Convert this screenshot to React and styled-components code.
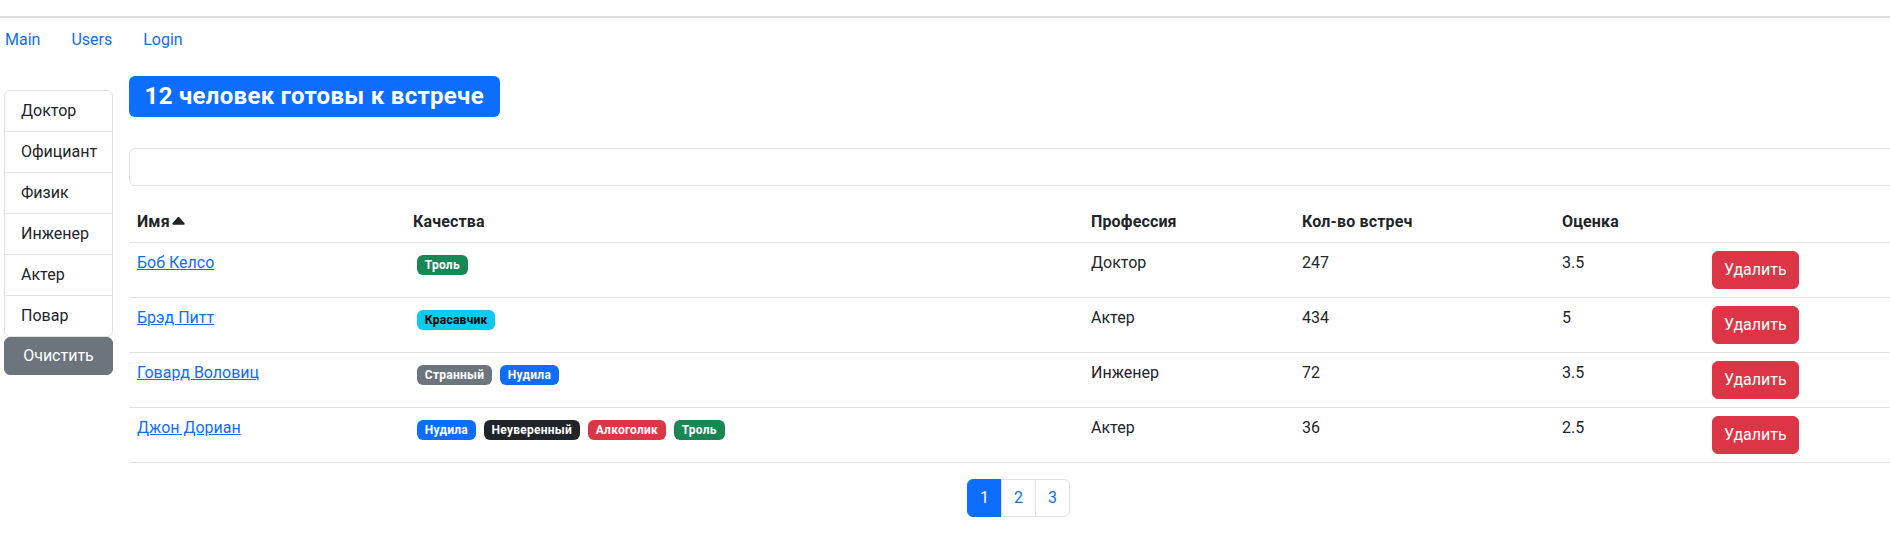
import React from "react";
import styled, { createGlobalStyle } from "styled-components";

const GlobalStyle = createGlobalStyle`
  html, body { margin: 0; padding: 0; background: #fff; overflow-x: hidden; }
  body {
    font-family: Roboto, "Noto Sans", "Liberation Sans", sans-serif;
    font-size: 16px;
    line-height: 1.5;
    color: #212529;
  }
  * { box-sizing: border-box; }
`;

const TopStrip = styled.div`
  height: 18px;
  border-bottom: 2px solid #dcdcdc;
`;

const Nav = styled.nav`
  display: flex;
  gap: 31px;
  padding: 3px 0 0 5px;
  height: 40px;
  align-items: center;
`;

const NavLink = styled.a`
  color: #0d6efd;
  text-decoration: none;
  line-height: 24px;
`;

const Layout = styled.div`
  display: flex;
  align-items: flex-start;
  gap: 16px;
  padding-left: 4px;
`;

const Sidebar = styled.aside`
  width: 109px;
  flex-shrink: 0;
  margin-top: 32px;
  display: flex;
  flex-direction: column;
`;

const ListGroup = styled.ul`
  list-style: none;
  margin: 0;
  padding: 0;
  border: 1px solid #dee2e6;
  border-radius: 6px;
  overflow: hidden;
`;

const ListItem = styled.li`
  padding: 8px 16px;
  line-height: 24px;
  white-space: nowrap;
  & + & { border-top: 1px solid #dee2e6; }
`;

const ClearButton = styled.button`
  height: 38px;
  width: 100%;
  border: 1px solid #6c757d;
  background: #6c757d;
  color: #fff;
  font: inherit;
  line-height: 24px;
  border-radius: 6px;
  padding: 6px 12px;
`;

const Main = styled.main`
  width: 1779px;
  flex-shrink: 0;
  margin-top: 18px;
`;

const Title = styled.h2`
  display: flex;
  margin: 0 0 31px;
`;

const TitleBadge = styled.span`
  display: inline-block;
  background: #0d6efd;
  color: #fff;
  font-size: 24px;
  font-weight: 700;
  line-height: 1;
  letter-spacing: 0.3px;
  padding: 8.4px 15.6px;
  border-radius: 6px;
`;

const SearchInput = styled.input`
  display: block;
  width: 100%;
  height: 38px;
  border: 1px solid #dee2e6;
  border-radius: 6px;
  padding: 6px 12px;
  font: inherit;
  margin-bottom: 16px;
`;

const Table = styled.table`
  width: 100%;
  border-collapse: collapse;
  table-layout: fixed;
  vertical-align: top;
`;

const Th = styled.th`
  text-align: left;
  font-weight: 700;
  letter-spacing: 0.15px;
  padding: 8px;
  line-height: 24px;
  border-bottom: 1px solid #dee2e6;
  white-space: nowrap;
`;

const Td = styled.td`
  padding: 8px;
  line-height: 24px;
  border-bottom: 1px solid #dee2e6;
  vertical-align: top;
`;

const NameLink = styled.a`
  color: #0d6efd;
  text-decoration: underline;
`;

const SortIcon = styled.svg`
  width: 17px;
  height: 17px;
  vertical-align: -2px;
`;

const badgeColors = {
  success: ["#198754", "#fff"],
  info: ["#0dcaf0", "#000"],
  secondary: ["#6c757d", "#fff"],
  primary: ["#0d6efd", "#fff"],
  dark: ["#212529", "#fff"],
  danger: ["#dc3545", "#fff"],
};

const Badge = styled.span`
  display: inline-block;
  margin: 4px;
  padding: 4.2px 7.8px;
  font-size: 12px;
  font-weight: 700;
  letter-spacing: 0.25px;
  line-height: 1;
  border-radius: 6px;
  background: ${(p) => badgeColors[p.$tone][0]};
  color: ${(p) => badgeColors[p.$tone][1]};
`;

const DeleteButton = styled.button`
  background: #dc3545;
  color: #fff;
  border: 1px solid #dc3545;
  border-radius: 6px;
  padding: 6px 11px;
  font: inherit;
  line-height: 24px;
`;

const Pager = styled.ul`
  display: flex;
  justify-content: center;
  list-style: none;
  margin: 16px 0 0;
  padding: 0;
`;

const PageLink = styled.li`
  padding: 6px 12px;
  line-height: 24px;
  border: 1px solid #dee2e6;
  color: ${(p) => (p.$active ? "#fff" : "#0d6efd")};
  background: ${(p) => (p.$active ? "#0d6efd" : "#fff")};
  border-color: ${(p) => (p.$active ? "#0d6efd" : "#dee2e6")};
  & + & { margin-left: -1px; }
  &:first-child { border-radius: 6px 0 0 6px; }
  &:last-child { border-radius: 0 6px 6px 0; }
`;

const professions = ["Доктор", "Официант", "Физик", "Инженер", "Актер", "Повар"];

const users = [
  { name: "Боб Келсо", qualities: [["Троль", "success"]], profession: "Доктор", meetings: 247, rate: "3.5" },
  { name: "Брэд Питт", qualities: [["Красавчик", "info"]], profession: "Актер", meetings: 434, rate: "5" },
  {
    name: "Говард Воловиц",
    qualities: [["Странный", "secondary"], ["Нудила", "primary"]],
    profession: "Инженер",
    meetings: 72,
    rate: "3.5",
  },
  {
    name: "Джон Дориан",
    qualities: [["Нудила", "primary"], ["Неуверенный", "dark"], ["Алкоголик", "danger"], ["Троль", "success"]],
    profession: "Актер",
    meetings: 36,
    rate: "2.5",
  },
];

export default function App() {
  return (
    <>
      <GlobalStyle />
      <TopStrip />
      <Nav>
        <NavLink>Main</NavLink>
        <NavLink>Users</NavLink>
        <NavLink>Login</NavLink>
      </Nav>
      <Layout>
        <Sidebar>
          <ListGroup>
            {professions.map((p) => (
              <ListItem key={p}>{p}</ListItem>
            ))}
          </ListGroup>
          <ClearButton>Очистить</ClearButton>
        </Sidebar>
        <Main>
          <Title>
            <TitleBadge>12 человек готовы к встрече</TitleBadge>
          </Title>
          <SearchInput type="text" />
          <Table>
            <colgroup>
              <col style={{ width: 276 }} />
              <col style={{ width: 678 }} />
              <col style={{ width: 211 }} />
              <col style={{ width: 260 }} />
              <col style={{ width: 150 }} />
              <col />
            </colgroup>
            <thead>
              <tr>
                <Th>
                  Имя
                  <SortIcon viewBox="0 0 16 16" fill="currentColor">
                    <path d="m7.247 4.86-4.796 5.481c-.566.647-.106 1.659.753 1.659h9.592a1 1 0 0 0 .753-1.659l-4.796-5.48a1 1 0 0 0-1.506 0z" />
                  </SortIcon>
                </Th>
                <Th>Качества</Th>
                <Th>Профессия</Th>
                <Th>Кол-во встреч</Th>
                <Th>Оценка</Th>
                <Th />
              </tr>
            </thead>
            <tbody>
              {users.map((u) => (
                <tr key={u.name}>
                  <Td>
                    <NameLink>{u.name}</NameLink>
                  </Td>
                  <Td>
                    {u.qualities.map(([q, tone]) => (
                      <Badge key={q} $tone={tone}>
                        {q}
                      </Badge>
                    ))}
                  </Td>
                  <Td>{u.profession}</Td>
                  <Td>{u.meetings}</Td>
                  <Td>{u.rate}</Td>
                  <Td>
                    <DeleteButton>Удалить</DeleteButton>
                  </Td>
                </tr>
              ))}
            </tbody>
          </Table>
          <Pager>
            <PageLink $active>1</PageLink>
            <PageLink>2</PageLink>
            <PageLink>3</PageLink>
          </Pager>
        </Main>
      </Layout>
    </>
  );
}
